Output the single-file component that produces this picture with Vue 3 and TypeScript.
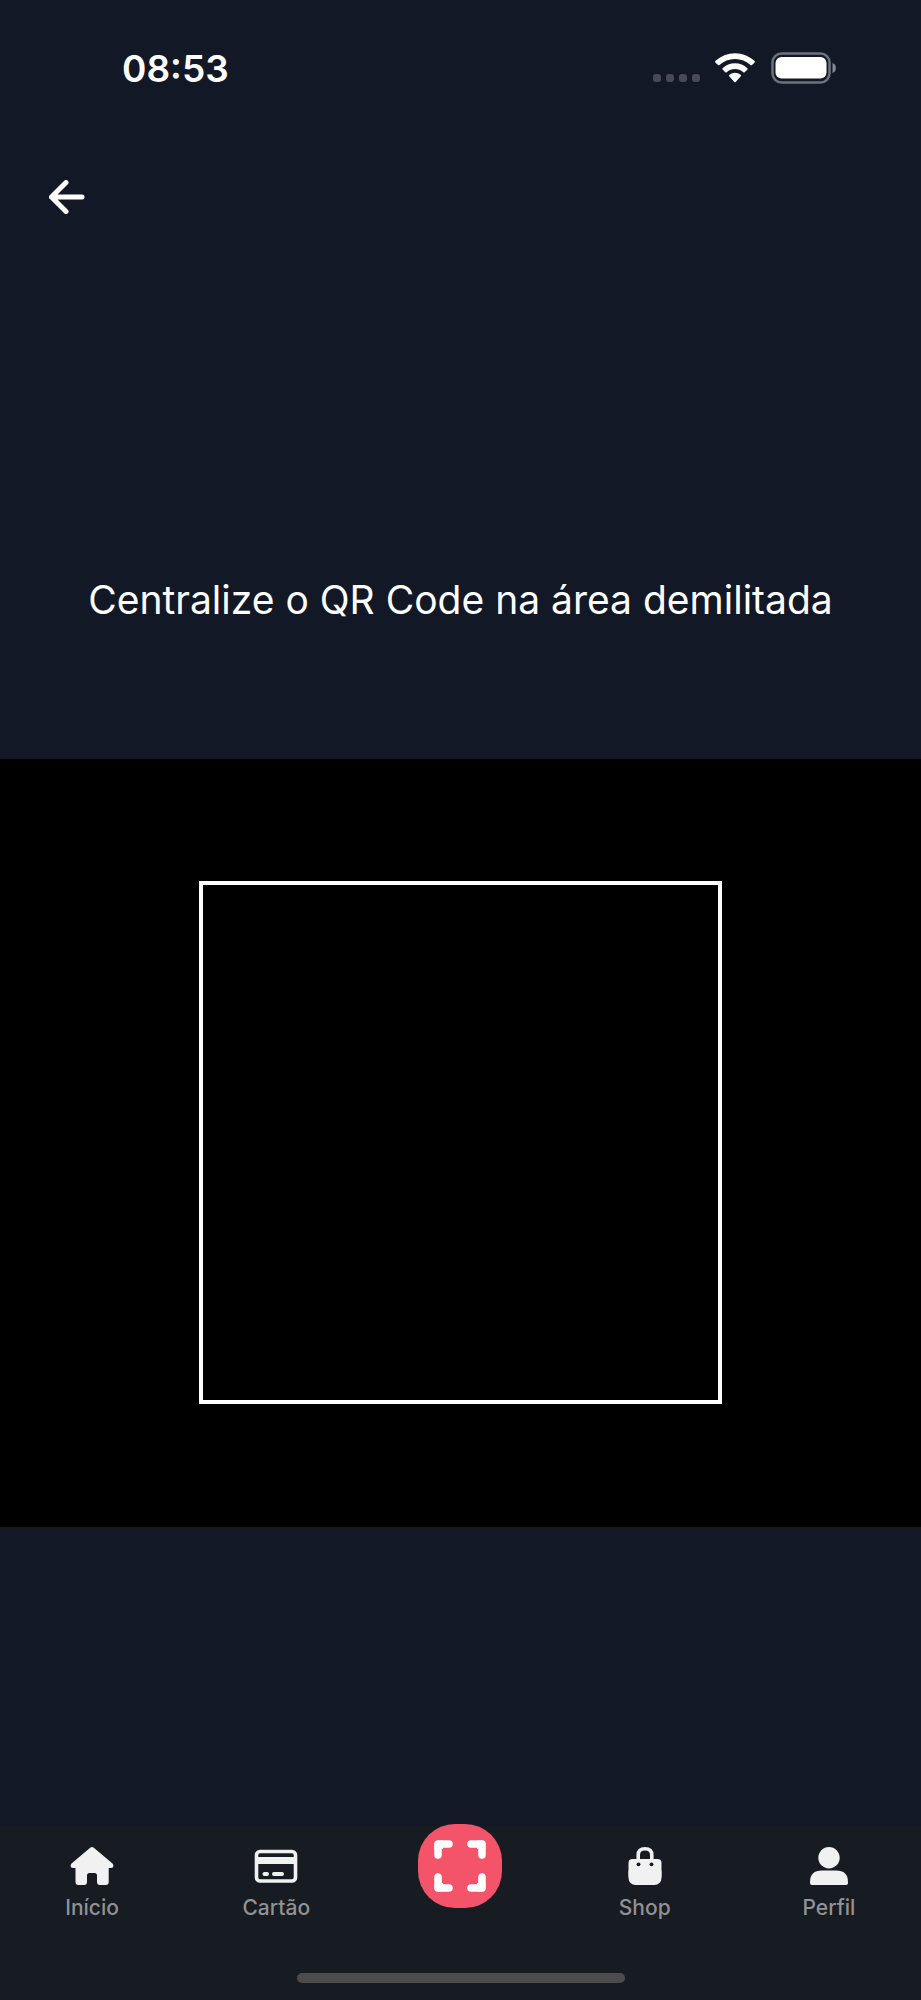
<script setup lang="ts">
import { ref } from 'vue'

type TabId = 'inicio' | 'cartao' | 'scan' | 'shop' | 'perfil'

interface Tab {
  id: TabId
  label: string
}

const tabs: Tab[] = [
  { id: 'inicio', label: 'Início' },
  { id: 'cartao', label: 'Cartão' },
  { id: 'scan', label: '' },
  { id: 'shop', label: 'Shop' },
  { id: 'perfil', label: 'Perfil' },
]

const current = ref<TabId>('scan')
const signalDots = 4
</script>

<template>
  <div class="screen">
    <div class="status">
      <time class="clock">08:53</time>
      <div class="indicators">
        <span class="signal"><i v-for="n in signalDots" :key="n" class="dot"></i></span>
        <svg class="wifi" viewBox="0 0 40 30" width="40" height="30" aria-hidden="true">
          <g fill="#fff">
            <path d="M20 0.3C12.6 0.3 5.9 3.200.4 8Q-.3 8.700.4 9.400L3 12Q3.700 12.700 4.500 12C8.700 8.100 14.100 6 20 6S31.300 8.100 35.500 12Q36.300 12.700 37 12L39.600 9.400Q40.300 8.700 39.600 8C34.100 3.200 27.400.3 20 .3Z" />
            <path d="M20 10.300C15.300 10.300 11 12.100 7.600 15.200Q6.900 15.900 7.600 16.600L10.300 19.200Q11 19.900 11.700 19.200C14 17.200 16.900 16 20 16S26 17.200 28.300 19.200Q29 19.900 29.700 19.200L32.400 16.600Q33.100 15.900 32.400 15.200C29 12.100 24.700 10.300 20 10.300Z" />
            <path d="M20 19.700C17.900 19.700 16 20.400 14.400 21.700Q13.500 22.500 14.400 23.400L19.300 28.900Q20 29.700 20.700 28.900L25.600 23.400Q26.500 22.500 25.600 21.700C24 20.400 22.100 19.700 20 19.700Z" />
          </g>
        </svg>
        <svg class="battery" viewBox="0 0 66 32" width="66" height="32" aria-hidden="true">
          <rect x="1.500" y="1.500" width="57" height="29" rx="9" fill="none" stroke="#6d717a" stroke-width="2.500" />
          <rect x="4.500" y="5" width="51" height="21.500" rx="6" fill="#fff" />
          <path d="M61.500 11C66 12 66 20 61.500 21Z" fill="#858890" />
        </svg>
      </div>
    </div>

    <header class="header">
      <button class="back" type="button" aria-label="Voltar">
        <svg viewBox="0 0 36 34" width="36" height="34" aria-hidden="true">
          <path d="M17 2.500 2.500 17 17 31.500M2.500 17H33" fill="none" stroke="#fff" stroke-width="5" stroke-linecap="round" stroke-linejoin="round" />
        </svg>
      </button>
    </header>

    <main class="content">
      <h1 class="title">Centralize o QR Code na área demilitada</h1>
      <section class="camera" aria-label="Câmera">
        <div class="frame"></div>
      </section>
    </main>

    <footer class="bottom">
      <nav class="tabs">
        <button
          v-for="tab in tabs"
          :key="tab.id"
          type="button"
          class="tab"
          :class="{ scan: tab.id === 'scan' }"
          :aria-label="tab.label || 'Escanear'"
          :aria-current="current === tab.id ? 'page' : undefined"
          @click="current = tab.id"
        >
          <svg v-if="tab.id === 'inicio'" class="icon" viewBox="0 0 44 40" aria-hidden="true">
            <path d="M20.500 1.600Q22 .4 23.500 1.600L42.500 17.500Q43.500 18.500 43.400 20Q43.300 22 41 22H38.700V36Q38.700 39 35.700 39H30Q27 39 27 36V29.500Q27 27 24.500 27H19.500Q17 27 17 29.500V36Q17 39 14 39H8.500Q5.500 39 5.500 36V22H3Q.7 22 .6 20Q.5 18.500 1.500 17.500Z" fill="#f1f1f2" />
          </svg>
          <svg v-else-if="tab.id === 'cartao'" class="icon" viewBox="0 0 44 40" aria-hidden="true">
            <rect x="2.500" y="5.500" width="39" height="29.500" rx="3.500" fill="none" stroke="#f1f1f2" stroke-width="3.600" />
            <path d="M3 11H41V18H3Z" fill="#f1f1f2" />
            <path d="M10.500 28H13M20 28H28" stroke="#f1f1f2" stroke-width="4" stroke-linecap="round" />
          </svg>
          <span v-else-if="tab.id === 'scan'" class="scan-disc">
            <svg viewBox="0 0 52 52" width="52" height="52" aria-hidden="true">
              <path d="M4 15V4H15M37 4H48V15M48 37V48H37M15 48H4V37" fill="none" stroke="#fff" stroke-width="7.500" stroke-linecap="round" stroke-linejoin="round" />
              <path d="M.5 4.500Q.5.500 4.500.500H9V9H.5ZM43 .500H47.500Q51.500.500 51.500 4.500V9H43ZM43 43H51.500V47.500Q51.500 51.500 47.500 51.500H43ZM.500 43H9V51.500H4.500Q.500 51.500.500 47.500Z" fill="#fff" />
            </svg>
          </span>
          <svg v-else-if="tab.id === 'shop'" class="icon" viewBox="0 0 44 40" aria-hidden="true">
            <path d="M15.200 14V9Q15.200 2.800 22 2.800T28.800 9V14" fill="none" stroke="#f1f1f2" stroke-width="3.600" />
            <rect x="5.500" y="13" width="33" height="20" rx="4" fill="#f1f1f2" />
            <rect x="5.500" y="19" width="33" height="20" rx="7" fill="#f1f1f2" />
            <circle cx="15.500" cy="18.300" r="1.900" fill="#171b22" />
            <circle cx="28.500" cy="18.300" r="1.900" fill="#171b22" />
          </svg>
          <svg v-else class="icon" viewBox="0 0 44 40" aria-hidden="true">
            <circle cx="22" cy="11.700" r="10.700" fill="#f1f1f2" />
            <path d="M3 37V36Q3 24.500 15 24.500H29Q41 24.500 41 36V37Q41 39 39 39H5Q3 39 3 37Z" fill="#f1f1f2" />
          </svg>
          <span v-if="tab.label" class="label">{{ tab.label }}</span>
        </button>
      </nav>
      <div class="home-bar"></div>
    </footer>
  </div>
</template>

<style>
body {
  margin: 0;
  background: #121826;
}
</style>

<style scoped>
.screen {
  display: flex;
  flex-direction: column;
  min-height: 100vh;
  background: #121826;
  color: #fff;
  font-family: Inter, "Liberation Sans", sans-serif;
}

.status {
  display: flex;
  align-items: center;
  justify-content: space-between;
  height: 136px;
  padding: 0 84px 0 122px;
}

.clock {
  padding-top: 2px;
  font-size: 37px;
  font-weight: 600;
  line-height: 48px;
}

.indicators {
  display: flex;
  align-items: center;
}

.signal {
  display: flex;
  gap: 5px;
  margin: 20px 15px 0 0;
}

.dot {
  width: 8px;
  height: 8px;
  border-radius: 3px;
  background: #484b57;
}

.wifi {
  margin-right: 16px;
}

.header {
  display: flex;
  align-items: center;
  height: 122px;
  padding: 0 49px;
}

.back {
  display: flex;
  padding: 0;
  border: 0;
  background: none;
  cursor: pointer;
}

.content {
  flex: 1;
}

.title {
  margin: 0;
  padding: 316px 24px 133px;
  font-size: 39px;
  font-weight: 400;
  line-height: 52px;
  text-align: center;
}

.camera {
  display: flex;
  align-items: center;
  justify-content: center;
  aspect-ratio: 6 / 5;
  background: #000;
}

.frame {
  box-sizing: border-box;
  width: 523px;
  max-width: 60%;
  aspect-ratio: 1;
  border: 4px solid #fff;
}

.bottom {
  display: flex;
  flex-direction: column;
  align-items: center;
  justify-content: space-between;
  box-sizing: border-box;
  height: 174px;
  padding-bottom: 17px;
  background: #171b22;
}

.tabs {
  display: grid;
  grid-template-columns: repeat(5, 1fr);
  align-items: start;
  width: 100%;
}

.tab {
  display: flex;
  flex-direction: column;
  align-items: center;
  gap: 8px;
  padding: 20px 0 0;
  border: 0;
  background: none;
  color: #929294;
  font-family: inherit;
  cursor: pointer;
}

.tab.scan {
  padding: 0;
  margin-top: -2px;
}

.icon {
  width: 44px;
  height: 40px;
}

.label {
  font-size: 21px;
  font-weight: 500;
  line-height: 28px;
}

.scan-disc {
  display: flex;
  align-items: center;
  justify-content: center;
  width: 84px;
  height: 84px;
  border-radius: 37px;
  background: #f4546a;
}

.home-bar {
  width: 328px;
  max-width: 60%;
  height: 10px;
  border-radius: 5px;
  background: #4c4c4c;
}
</style>
